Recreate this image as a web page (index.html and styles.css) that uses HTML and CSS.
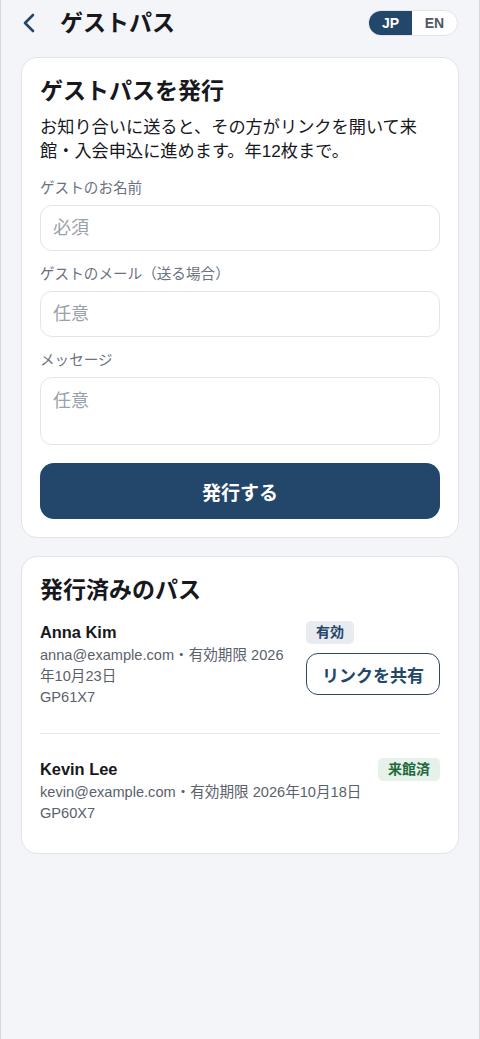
FILE: index.html
```html
<!DOCTYPE html>
<html lang="ja">
  <head>
    <meta charset="UTF-8" />
    <meta name="viewport" content="width=device-width, initial-scale=1.0" />
    <title>ゲストパス</title>
    <link rel="stylesheet" href="styles.css">
  </head>

  <body>
    <div class="app">
      <div class="topbar">
        <a href="#" class="back">
          <svg width="14" height="20" viewBox="0 0 14 20">
            <path d="M11 2 L3 10 L11 18" fill="none" stroke="#23466b" stroke-width="2.6" stroke-linecap="round" stroke-linejoin="round" />
          </svg>
        </a>
        <h1 class="page-title">ゲストパス</h1>
        <div class="lang">
          <button class="lang-btn active">JP</button>
          <button class="lang-btn">EN</button>
        </div>
      </div>

      <div class="card">
        <h2 class="card-title">ゲストパスを発行</h2>
        <p class="lead">お知り合いに送ると、その方がリンクを開いて来館・入会申込に進めます。年12枚まで。</p>

        <form id="guest_form">
          <label class="field-label">ゲストのお名前</label>
          <input class="field" type="text" placeholder="必須" />

          <label class="field-label">ゲストのメール（送る場合）</label>
          <input class="field" type="email" placeholder="任意" />

          <label class="field-label">メッセージ</label>
          <textarea class="field area" placeholder="任意"></textarea>

          <button class="submit" type="submit">発行する</button>
        </form>
      </div>

      <div class="card">
        <h2 class="card-title">発行済みのパス</h2>

        <div class="pass">
          <div class="pass-info">
            <div class="pass-name">Anna Kim</div>
            <div class="pass-meta">anna@example.com・有効期限 2026年10月23日</div>
            <div class="pass-meta">GP61X7</div>
          </div>
          <div class="pass-side">
            <span class="badge">有効</span>
            <button class="share">リンクを共有</button>
          </div>
        </div>

        <div class="pass">
          <div class="pass-info">
            <div class="pass-name">Kevin Lee</div>
            <div class="pass-meta">kevin@example.com・有効期限 2026年10月18日</div>
            <div class="pass-meta">GP60X7</div>
          </div>
          <div class="pass-side">
            <span class="badge visited">来館済</span>
          </div>
        </div>
      </div>
    </div>
  </body>
</html>
```

FILE: styles.css
```css
body {
  margin: 0;
  background-color: #f3f5f8;
  font-family: "Liberation Sans", "Noto Sans CJK JP", sans-serif;
  color: #16181d;
}

.app {
  min-height: 100vh;
  border-left: 1px solid #d5d8dd;
  border-right: 1px solid #d5d8dd;
  width: 480px;
  box-sizing: border-box;
  padding: 10px 20px 40px;
  background-color: #f3f5f8;
}

.topbar {
  display: flex;
  align-items: center;
  height: 26px;
  margin-bottom: 21px;
}

.back {
  display: flex;
  align-items: center;
  width: 38px;
  padding-left: 1px;
}

.page-title {
  margin: 0;
  font-size: 23px;
  font-weight: 700;
  line-height: 26px;
  flex: 1;
}

.lang {
  display: flex;
  border: 1px solid #e1e4e9;
  border-radius: 13px;
  overflow: hidden;
  background-color: #fff;
  height: 26px;
  box-sizing: border-box;
  margin-right: 1px;
}

.lang-btn {
  border: 0;
  background: none;
  font-family: inherit;
  font-size: 14px;
  font-weight: 700;
  color: #505866;
  width: 45px;
  padding: 0;
}

.lang-btn.active {
  background-color: #23466b;
  color: #fff;
  width: 43px;
}

.card {
  background-color: #fff;
  border: 1px solid #e1e4e8;
  border-radius: 16px;
  padding: 18px 18px;
  margin-bottom: 18px;
}

.card-title {
  margin: 0;
  font-size: 23px;
  font-weight: 700;
  line-height: 30px;
}

.lead {
  margin: 9px 0 0;
  font-size: 17.2px;
  line-height: 24px;
}

.field-label {
  display: block;
  margin-top: 15px;
  margin-bottom: 7px;
  font-size: 14.6px;
  line-height: 20px;
  color: #6b7280;
}

.field + .field-label {
  margin-top: 13px;
}

.field {
  display: block;
  width: 100%;
  box-sizing: border-box;
  height: 46px;
  border: 1px solid #e1e4e8;
  border-radius: 12px;
  padding: 0 12px;
  font-family: inherit;
  font-size: 18px;
  color: #16181d;
}

.field::placeholder {
  color: #9aa1ab;
}

.area {
  height: 68px;
  padding-top: 10px;
  resize: none;
  line-height: 26px;
}

.submit {
  display: block;
  width: 100%;
  height: 56px;
  margin-top: 18px;
  border: 0;
  border-radius: 14px;
  background-color: #23466b;
  color: #fff;
  font-family: inherit;
  font-size: 19px;
  font-weight: 700;
}

.pass {
  display: flex;
  gap: 12px;
  align-items: flex-start;
  padding: 24px 0 11px;
  border-top: 1px solid #e3e6ea;
}

.pass:first-of-type {
  padding-top: 16px;
  padding-bottom: 25px;
  border-top: 0;
}

.pass-info {
  flex: 1;
}

.pass-name {
  font-size: 16.4px;
  font-weight: 700;
  line-height: 22px;
  margin-bottom: 2px;
}

.pass-meta {
  font-size: 14.6px;
  line-height: 21px;
  color: #5a616b;
}

.pass-side {
  display: flex;
  flex-direction: column;
  align-items: flex-start;
  gap: 9px;
  flex-shrink: 0;
}

.badge {
  display: inline-block;
  padding: 0 10px;
  height: 23px;
  line-height: 23px;
  border-radius: 5px;
  background-color: #e8ebef;
  color: #23466b;
  font-size: 14px;
  font-weight: 700;
}

.badge.visited {
  background-color: #e6f1ea;
  color: #1f6a3a;
}

.share {
  width: 134px;
  height: 42px;
  border: 1.5px solid #2b4a6b;
  border-radius: 12px;
  background-color: #fff;
  color: #23466b;
  font-family: inherit;
  font-size: 17px;
  font-weight: 700;
  padding: 0;
}
```
